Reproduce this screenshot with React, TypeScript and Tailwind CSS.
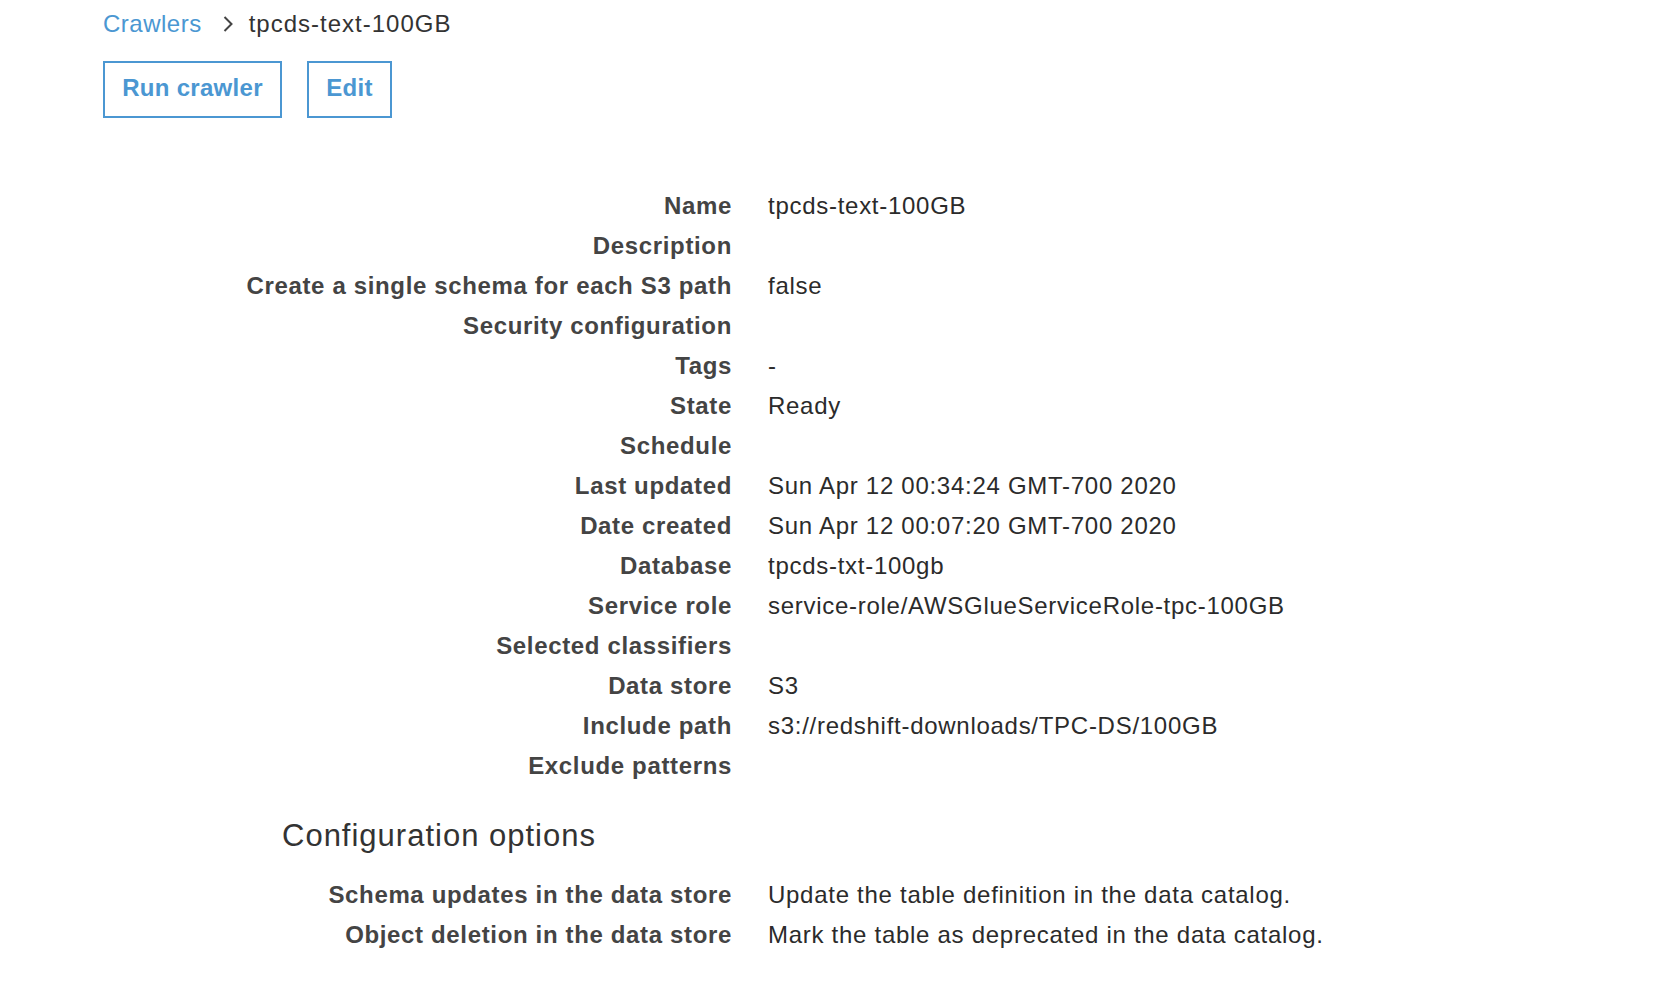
import React from "react";

const rows: [string, string][] = [
  ["Name", "tpcds-text-100GB"],
  ["Description", ""],
  ["Create a single schema for each S3 path", "false"],
  ["Security configuration", ""],
  ["Tags", "-"],
  ["State", "Ready"],
  ["Schedule", ""],
  ["Last updated", "Sun Apr 12 00:34:24 GMT-700 2020"],
  ["Date created", "Sun Apr 12 00:07:20 GMT-700 2020"],
  ["Database", "tpcds-txt-100gb"],
  ["Service role", "service-role/AWSGlueServiceRole-tpc-100GB"],
  ["Selected classifiers", ""],
  ["Data store", "S3"],
  ["Include path", "s3://redshift-downloads/TPC-DS/100GB"],
  ["Exclude patterns", ""],
];

const config: [string, string][] = [
  ["Schema updates in the data store", "Update the table definition in the data catalog."],
  ["Object deletion in the data store", "Mark the table as deprecated in the data catalog."],
];

function DetailRows({ items }: { items: [string, string][] }) {
  return (
    <div className="grid grid-cols-[732px_1fr] gap-x-[36px]">
      {items.map(([k, v]) => (
        <React.Fragment key={k}>
          <div className="h-[40px] flex items-center justify-end text-right font-bold text-[24px] tracking-[0.65px] text-[#444444] whitespace-nowrap">
            {k}
          </div>
          <div className="h-[40px] flex items-center text-[24px] tracking-[0.72px] text-[#2b2b2b] whitespace-nowrap">
            {v}
          </div>
        </React.Fragment>
      ))}
    </div>
  );
}

export default function App() {
  return (
    <div
      className="min-h-[984px] w-full bg-white pt-[4px]"
      style={{ fontFamily: '"Liberation Sans", Arial, sans-serif' }}
    >
      <div className="pl-[103px]">
        <div className="h-[40px] flex items-center text-[24px]">
          <span className="text-[#4b97d2] tracking-[0.5px]">Crawlers</span>
          <svg
            className="ml-[20px] mr-[15px]"
            width="12"
            height="18"
            viewBox="0 0 12 18"
            fill="none"
          >
            <path d="M2.5 2 L9.5 9 L2.5 16" stroke="#444444" strokeWidth="2" />
          </svg>
          <span className="text-[#333333] tracking-[1px]">tpcds-text-100GB</span>
        </div>
        <div className="mt-[17px] flex gap-[25px]">
          <button className="w-[179px] h-[57px] pb-[4px] border-2 border-[#4b97d2] flex items-center justify-center text-[#4b97d2] font-bold text-[24px] tracking-[0.3px] bg-white">
            Run crawler
          </button>
          <button className="w-[85px] h-[57px] pb-[4px] border-2 border-[#4b97d2] flex items-center justify-center text-[#4b97d2] font-bold text-[24px] tracking-[0.3px] bg-white">
            Edit
          </button>
        </div>
      </div>

      <div className="mt-[68px]">
        <DetailRows items={rows} />
      </div>

      <div className="mt-[30px] pl-[282px] h-[40px] flex items-center text-[31px] tracking-[1px] text-[#333333]">
        Configuration options
      </div>

      <div className="mt-[19px]">
        <DetailRows items={config} />
      </div>
    </div>
  );
}
